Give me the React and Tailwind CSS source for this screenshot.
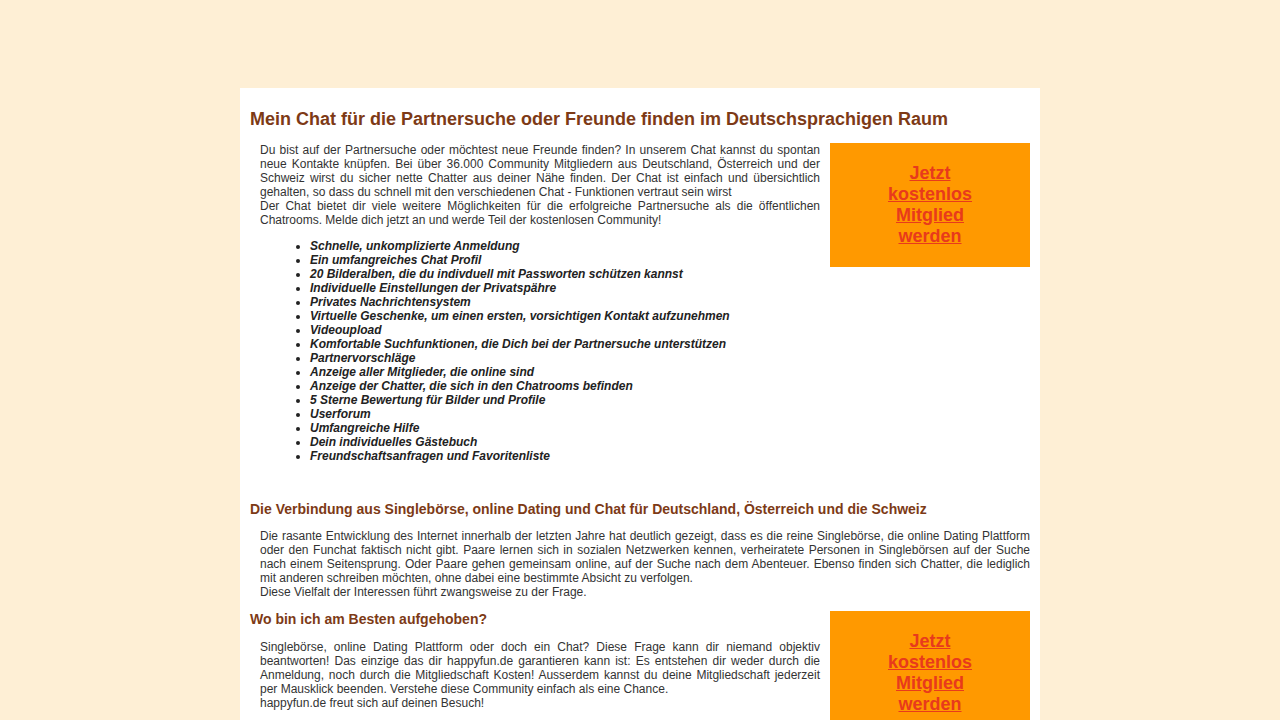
import React from "react";

const features = [
  "Schnelle, unkomplizierte Anmeldung",
  "Ein umfangreiches Chat Profil",
  "20 Bilderalben, die du indivduell mit Passworten schützen kannst",
  "Individuelle Einstellungen der Privatspähre",
  "Privates Nachrichtensystem",
  "Virtuelle Geschenke, um einen ersten, vorsichtigen Kontakt aufzunehmen",
  "Videoupload",
  "Komfortable Suchfunktionen, die Dich bei der Partnersuche unterstützen",
  "Partnervorschläge",
  "Anzeige aller Mitglieder, die online sind",
  "Anzeige der Chatter, die sich in den Chatrooms befinden",
  "5 Sterne Bewertung für Bilder und Profile",
  "Userforum",
  "Umfangreiche Hilfe",
  "Dein individuelles Gästebuch",
  "Freundschaftsanfragen und Favoritenliste",
];

function JoinBox() {
  return (
    <div className="w-[200px] h-[124px] shrink-0 ml-[10px] bg-[#ff9900] flex items-center justify-center">
      <a
        href="#"
        className="text-[18px] leading-[21px] font-bold text-[#e83a1c] underline text-center block"
      >
        Jetzt
        <br />
        kostenlos
        <br />
        Mitglied
        <br />
        werden
      </a>
    </div>
  );
}

export default function App() {
  return (
    <div
      className="min-h-screen bg-[#feefd5] pt-[88px]"
      style={{ fontFamily: '"Liberation Sans", Arial, sans-serif' }}
    >
      <div className="w-[800px] mx-auto bg-white px-[10px] pt-[20px] pb-[20px] text-[12px] leading-[14px] text-[#333]">
        <h1 className="text-[18px] leading-[22px] font-bold text-[#7d3a16] mb-[13px]">
          Mein Chat für die Partnersuche oder Freunde finden im Deutschsprachigen Raum
        </h1>
        <div className="flex items-start">
          <div className="flex-1 pl-[10px]">
            <p className="text-justify">
              Du bist auf der Partnersuche oder möchtest neue Freunde finden? In unserem Chat kannst du spontan neue Kontakte knüpfen. Bei über 36.000 Community Mitgliedern aus Deutschland, Österreich und der Schweiz wirst du sicher nette Chatter aus deiner Nähe finden. Der Chat ist einfach und übersichtlich gehalten, so dass du schnell mit den verschiedenen Chat - Funktionen vertraut sein wirst
              <br />
              Der Chat bietet dir viele weitere Möglichkeiten für die erfolgreiche Partnersuche als die öffentlichen Chatrooms. Melde dich jetzt an und werde Teil der kostenlosen Community!
            </p>
          </div>
          <JoinBox />
        </div>
        <ul className="list-disc pl-[60px] mt-[-28px] font-bold italic text-[#222]">
          {features.map((f) => (
            <li key={f}>{f}</li>
          ))}
        </ul>

        <h2 className="text-[14px] leading-[18px] font-bold text-[#7d3a16] mt-[37px] mb-[11px]">
          Die Verbindung aus Singlebörse, online Dating und Chat für Deutschland, Österreich und die Schweiz
        </h2>
        <p className="pl-[10px] text-justify">
          Die rasante Entwicklung des Internet innerhalb der letzten Jahre hat deutlich gezeigt, dass es die reine Singlebörse, die online Dating Plattform oder den Funchat faktisch nicht gibt. Paare lernen sich in sozialen Netzwerken kennen, verheiratete Personen in Singlebörsen auf der Suche nach einem Seitensprung. Oder Paare gehen gemeinsam online, auf der Suche nach dem Abenteuer. Ebenso finden sich Chatter, die lediglich mit anderen schreiben möchten, ohne dabei eine bestimmte Absicht zu verfolgen.
          <br />
          Diese Vielfalt der Interessen führt zwangsweise zu der Frage.
        </p>

        <div className="flex items-start mt-[12px]">
          <div className="flex-1">
            <h3 className="text-[14px] leading-[18px] font-bold text-[#7d3a16] mt-[-1px] mb-[12px]">
              Wo bin ich am Besten aufgehoben?
            </h3>
            <p className="pl-[10px] text-justify">
              Singlebörse, online Dating Plattform oder doch ein Chat? Diese Frage kann dir niemand objektiv beantworten! Das einzige das dir happyfun.de garantieren kann ist: Es entstehen dir weder durch die Anmeldung, noch durch die Mitgliedschaft Kosten! Ausserdem kannst du deine Mitgliedschaft jederzeit per Mausklick beenden. Verstehe diese Community einfach als eine Chance.
              <br />
              happyfun.de freut sich auf deinen Besuch!
            </p>
          </div>
          <JoinBox />
        </div>
      </div>
    </div>
  );
}
